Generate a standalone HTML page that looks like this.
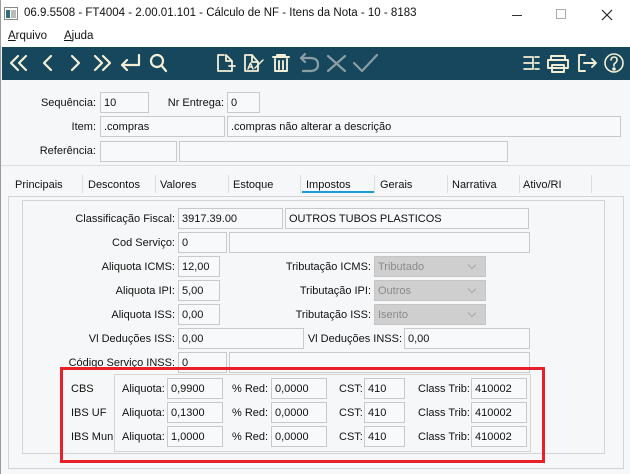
<!DOCTYPE html>
<html><head><meta charset="utf-8"><style>
*{margin:0;padding:0;box-sizing:border-box}
body{width:630px;height:474px;overflow:hidden;background:#f6f7f8;font-family:"Liberation Sans",sans-serif;font-size:11px;color:#111;position:relative}
.a{position:absolute;white-space:nowrap}
.title{left:0;top:0;width:630px;height:26px;background:#fff}
.menu{left:0;top:26px;width:630px;height:21px;background:#fff}
.tb{left:2px;top:47px;width:628px;height:33px;background:#17475c}
.in{position:absolute;height:21px;border:1px solid #c9c9c9;background:#f8f9fa;padding:4px 0 0 3px;white-space:nowrap;overflow:hidden}
.lb{position:absolute;text-align:right;white-space:nowrap}
.sel{position:absolute;height:21px;background:#cfcfcf;border:1px solid #c4c4c4;color:#8a8a8a;padding:4px 0 0 3px}
.sel:after{content:"";position:absolute;right:10px;top:5px;width:5px;height:5px;border-right:1px solid #a9a9a9;border-bottom:1px solid #a9a9a9;transform:rotate(45deg)}
.sep{position:absolute;top:175px;width:1px;height:18px;background:#ddd}
.tab{position:absolute;top:179px}
</style></head><body>
<div class="a title"></div>
<svg class="a" style="left:4px;top:7px" width="14" height="13"><rect x="0.5" y="0.5" width="13" height="12" fill="#fff" stroke="#888"/><rect x="2" y="3" width="4" height="8" fill="#2d6f78"/><rect x="7" y="3" width="5" height="8" fill="#bbb"/></svg>
<div class="a" style="left:24px;top:7px;font-size:11.5px">06.9.5508 - FT4004 - 2.00.01.101 - Cálculo de NF - Itens da Nota - 10 - 8183</div>
<div class="a" style="left:512px;top:15px;width:10px;height:1px;background:#333"></div>
<div class="a" style="left:556px;top:9px;width:10px;height:10px;border:1px solid #aaa"></div>
<svg class="a" style="left:601px;top:9px" width="12" height="12"><path d="M1 1L11 11M11 1L1 11" stroke="#222" stroke-width="1.2"/></svg>
<div class="a menu"></div>
<div class="a" style="left:8px;top:30px;font-size:11.5px"><u>A</u>rquivo</div>
<div class="a" style="left:64px;top:30px;font-size:11.5px"><u>A</u>juda</div>
<div class="a tb"></div>
<svg class="a" style="left:0;top:47px" width="630" height="33" fill="none" stroke="#f2efd6" stroke-width="2.2" stroke-linecap="round" stroke-linejoin="round">
<path d="M18 9L11 16L18 23M26 9L19 16L26 23"/>
<path d="M51 9L44 16L51 23"/>
<path d="M72 9L79 16L72 23"/>
<path d="M95 9L102 16L95 23M103 9L110 16L103 23"/>
<path d="M139 8V18H122M127 13L122 18L127 23"/>
<circle cx="157" cy="14" r="6"/><path d="M161.5 18.5L166 24"/>
<path d="M224 8H218V24H232V14L226 8V14H232M229 19H235M232 16V22" stroke-width="1.8"/>
<path d="M252 8H245V24H258V15L252 8V15H258" stroke-width="1.8"/><path d="M248 22L250.5 16L253 22M249 20H252M263 13L255 21" stroke-width="1.5"/>
<path d="M273 10H289M277 10V8H285V10M275 12V24H287V12M279 14V22M283 14V22" stroke-width="1.9"/>
<path d="M301 11H310Q318 11 318 17.5Q318 24 310 24H303M301 11L305 7M301 11L305 15" stroke="#8a9ea3"/>
<path d="M328 9L345 24M345 9L328 24" stroke="#8a9ea3"/>
<path d="M354 16L362 24L377 8" stroke="#8a9ea3"/>
<path d="M524 10H533M524 16H533M524 22H533M533 10V22M535 10H539M535 16H539M535 22H539" stroke-width="1.7"/>
<path d="M551 13V9H565V13M548 13H568V21H548ZM552 18H564V25H552Z" stroke-width="1.9"/>
<path d="M585 8H579V24H585M584 16H596M592 12L596 16L592 20" stroke-width="1.9"/>
<circle cx="614" cy="16" r="9" stroke-width="1.6"/><path d="M611 13Q611.5 10 614 10Q617 10 617 13Q617 15 614 17V19" stroke-width="1.6"/><circle cx="614" cy="22" r=".7" fill="#f2efd6"/>
</svg>
<div class="a" style="left:0;top:165px;width:630px;height:1px;background:#ddd"></div>
<div class="lb" style="right:534px;top:97px">Sequência:</div>
<div class="in" style="left:100px;top:92px;width:49px">10</div>
<div class="lb" style="right:406px;top:97px">Nr Entrega:</div>
<div class="in" style="left:227px;top:92px;width:33px">0</div>
<div class="lb" style="right:534px;top:121px">Item:</div>
<div class="in" style="left:100px;top:116px;width:125px">.compras</div>
<div class="in" style="left:227px;top:116px;width:394px">.compras não alterar a descrição</div>
<div class="lb" style="right:534px;top:145px">Referência:</div>
<div class="in" style="left:100px;top:141px;width:77px"></div>
<div class="in" style="left:179px;top:141px;width:329px"></div>
<div class="tab" style="left:15px">Principais</div><div class="sep" style="left:82px"></div>
<div class="tab" style="left:88px">Descontos</div><div class="sep" style="left:155px"></div>
<div class="tab" style="left:160px">Valores</div><div class="sep" style="left:228px"></div>
<div class="tab" style="left:233px">Estoque</div><div class="sep" style="left:300px"></div>
<div class="tab" style="left:306px">Impostos</div><div class="sep" style="left:374px"></div>
<div class="tab" style="left:380px">Gerais</div><div class="sep" style="left:447px"></div>
<div class="tab" style="left:452px">Narrativa</div><div class="sep" style="left:519px"></div>
<div class="tab" style="left:523px">Ativo/RI</div><div class="sep" style="left:591px"></div>
<div class="a" style="left:302px;top:191px;width:72px;height:2px;background:#1a9ad6"></div>
<div class="a" style="left:8px;top:196px;width:616px;height:273px;border:1px solid #d4d4d4"></div>
<div class="a" style="left:22px;top:200px;width:583px;height:254px;border:1px solid #d4d4d4"></div>
<div class="lb" style="right:455px;top:213px">Classificação Fiscal:</div>
<div class="in" style="left:178px;top:208px;width:105px">3917.39.00</div>
<div class="in" style="left:285px;top:208px;width:244px">OUTROS TUBOS PLASTICOS</div>
<div class="lb" style="right:455px;top:237px">Cod Serviço:</div>
<div class="in" style="left:178px;top:232px;width:49px">0</div>
<div class="in" style="left:229px;top:232px;width:301px"></div>
<div class="lb" style="right:455px;top:261px">Aliquota ICMS:</div>
<div class="in" style="left:178px;top:256px;width:42px">12,00</div>
<div class="lb" style="right:259px;top:261px">Tributação ICMS:</div>
<div class="sel" style="left:374px;top:256px;width:112px">Tributado</div>
<div class="lb" style="right:455px;top:285px">Aliquota IPI:</div>
<div class="in" style="left:178px;top:280px;width:42px">5,00</div>
<div class="lb" style="right:259px;top:285px">Tributação IPI:</div>
<div class="sel" style="left:374px;top:280px;width:112px">Outros</div>
<div class="lb" style="right:455px;top:309px">Aliquota ISS:</div>
<div class="in" style="left:178px;top:304px;width:42px">0,00</div>
<div class="lb" style="right:259px;top:309px">Tributação ISS:</div>
<div class="sel" style="left:374px;top:304px;width:112px">Isento</div>
<div class="lb" style="right:455px;top:333px">Vl Deduções ISS:</div>
<div class="in" style="left:178px;top:328px;width:126px">0,00</div>
<div class="lb" style="right:228px;top:333px">Vl Deduções INSS:</div>
<div class="in" style="left:404px;top:328px;width:126px">0,00</div>
<div class="lb" style="right:455px;top:357px">Código Serviço INSS:</div>
<div class="in" style="left:178px;top:352px;width:49px">0</div>
<div class="in" style="left:229px;top:352px;width:301px"></div>
<div class="a" style="left:114px;top:374px;width:417px;height:78px;border:1px solid #d4d4d4"></div>
<div class="a" style="left:71px;top:383px">CBS</div>
<div class="a" style="left:71px;top:407px">IBS UF</div>
<div class="a" style="left:71px;top:431px">IBS Mun</div>
<div class="a" style="left:122px;top:383px">Aliquota:</div><div class="in" style="left:167px;top:378px;width:56px">0,9900</div>
<div class="a" style="left:232px;top:383px">% Red:</div><div class="in" style="left:271px;top:378px;width:56px">0,0000</div>
<div class="a" style="left:339px;top:383px">CST:</div><div class="in" style="left:364px;top:378px;width:41px">410</div>
<div class="a" style="left:418px;top:383px">Class Trib:</div><div class="in" style="left:471px;top:378px;width:56px">410002</div>
<div class="a" style="left:122px;top:407px">Aliquota:</div><div class="in" style="left:167px;top:402px;width:56px">0,1300</div>
<div class="a" style="left:232px;top:407px">% Red:</div><div class="in" style="left:271px;top:402px;width:56px">0,0000</div>
<div class="a" style="left:339px;top:407px">CST:</div><div class="in" style="left:364px;top:402px;width:41px">410</div>
<div class="a" style="left:418px;top:407px">Class Trib:</div><div class="in" style="left:471px;top:402px;width:56px">410002</div>
<div class="a" style="left:122px;top:431px">Aliquota:</div><div class="in" style="left:167px;top:426px;width:56px">1,0000</div>
<div class="a" style="left:232px;top:431px">% Red:</div><div class="in" style="left:271px;top:426px;width:56px">0,0000</div>
<div class="a" style="left:339px;top:431px">CST:</div><div class="in" style="left:364px;top:426px;width:41px">410</div>
<div class="a" style="left:418px;top:431px">Class Trib:</div><div class="in" style="left:471px;top:426px;width:56px">410002</div>
<div class="a" style="left:60px;top:367px;width:485px;height:96px;border:3px solid #e8202a"></div>
<div class="a" style="left:0;top:0;width:1px;height:474px;background:#9a9a9a"></div>
</body></html>
